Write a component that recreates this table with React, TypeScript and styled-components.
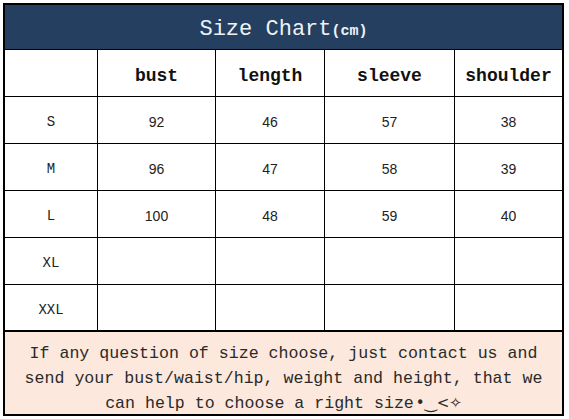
import React from "react";
import styled, { createGlobalStyle } from "styled-components";

const Global = createGlobalStyle`
  html, body { margin: 0; padding: 0; background: #ffffff; }
  body { width: 569px; height: 419px; overflow: hidden; }
`;

const Page = styled.div`
  padding: 3px 0 0 3px;
`;

const Frame = styled.div`
  width: 557px;
  border: 2px solid #000;
  background: #000;
`;

const TitleBar = styled.div`
  height: 45px;
  background: #243f60;
  border-bottom: 1px solid #000;
  display: flex;
  align-items: center;
  justify-content: center;
  color: #eef2f5;
  font-family: "Liberation Mono", "DejaVu Sans Mono", monospace;
  font-size: 22px;
  padding-top: 5px;
  box-sizing: border-box;
`;

const Unit = styled.span`
  font-size: 15px;
  font-weight: bold;
  align-self: center;
  margin-top: 3px;
`;

const Grid = styled.div`
  display: grid;
  grid-template-columns: 92px 117px 108px 129px 107px;
  grid-template-rows: repeat(5, 46px) 45px;
  gap: 1px;
  background: #000;
`;

const Cell = styled.div<{ $kind: "head" | "size" | "num" }>`
  background: #fff;
  display: flex;
  align-items: center;
  justify-content: center;
  color: ${(p) => (p.$kind === "head" ? "#111" : "#222")};
  font-family: ${(p) =>
    p.$kind === "num"
      ? `"Liberation Sans", Arial, sans-serif`
      : `"Liberation Mono", "DejaVu Sans Mono", monospace`};
  font-size: ${(p) => (p.$kind === "head" ? "18px" : "14px")};
  font-weight: ${(p) => (p.$kind === "head" ? "bold" : "normal")};
  padding-top: ${(p) => (p.$kind === "head" ? "5px" : "4px")};
  box-sizing: border-box;
`;

const Note = styled.div`
  border-top: 2px solid #000;
  background: #fce8dc;
  text-align: center;
  font-family: "Liberation Mono", "DejaVu Sans Mono", monospace;
  font-size: 16.6px;
  line-height: 25px;
  color: #2a2a2a;
  padding: 9px 4px 0;
  box-sizing: border-box;
  height: 84px;
`;

const Face = styled.span`
  font-family: "DejaVu Sans", sans-serif;
  font-size: 15px;
  margin-left: 2px;
`;

const columns = ["", "bust", "length", "sleeve", "shoulder"];
const rows: [string, string, string, string, string][] = [
  ["S", "92", "46", "57", "38"],
  ["M", "96", "47", "58", "39"],
  ["L", "100", "48", "59", "40"],
  ["XL", "", "", "", ""],
  ["XXL", "", "", "", ""],
];

export default function App() {
  return (
    <Page>
      <Global />
      <Frame>
        <TitleBar>
          Size Chart<Unit>(cm)</Unit>
        </TitleBar>
        <Grid>
          {columns.map((c, i) => (
            <Cell key={"h" + i} $kind="head">
              {c}
            </Cell>
          ))}
          {rows.map((r, ri) =>
            r.map((v, ci) => (
              <Cell key={ri + "-" + ci} $kind={ci === 0 ? "size" : "num"}>
                {v}
              </Cell>
            ))
          )}
        </Grid>
        <Note>
          If any question of size choose, just contact us and
          <br />
          send your bust/waist/hip, weight and height, that we
          <br />
          can help to choose a right size<Face>•‿&lt;✧</Face>
        </Note>
      </Frame>
    </Page>
  );
}
